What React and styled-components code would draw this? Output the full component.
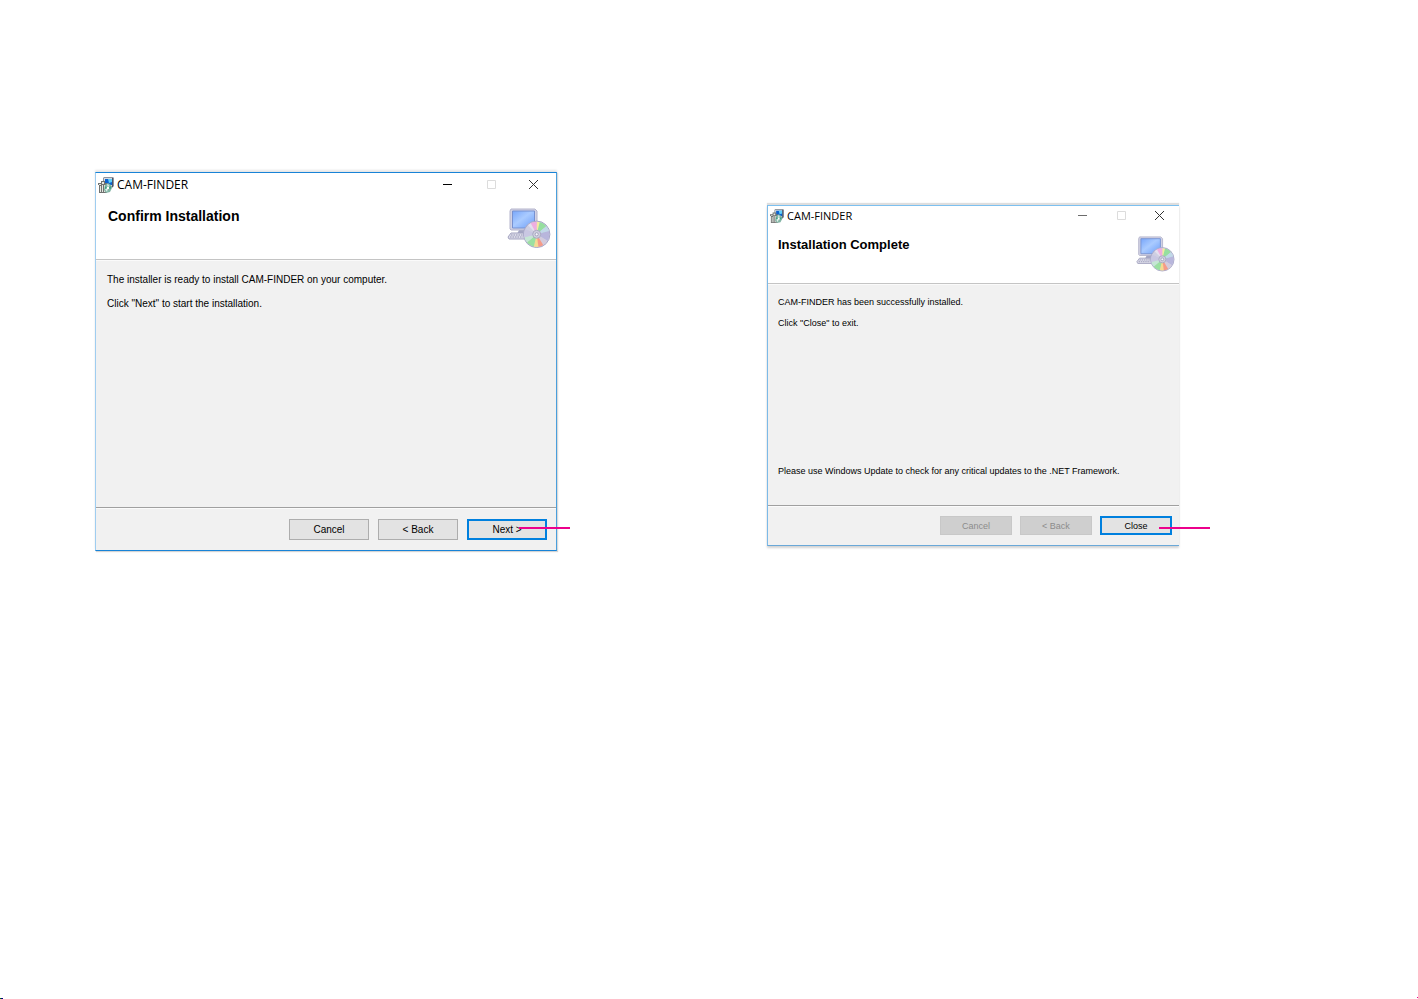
import React from 'react';

import styled, { createGlobalStyle, css } from 'styled-components';

const GlobalStyle = createGlobalStyle`
  * {
    box-sizing: border-box;
  }
  body {
    margin: 0;
    background: #fff;
    color: #000;
    font-family: 'Liberation Sans', Arial, sans-serif;
  }
`;

const Page = styled.main`
  position: relative;
  min-height: 100vh;
  display: grid;
  grid-template-columns: 95fr 462fr 210fr 412fr 239fr;
  align-items: start;
`;

const EdgeMark = styled.span`
  position: absolute;
  height: 1px;
  ${(props) =>
    props.$side === 'left'
      ? css`
          left: 0;
          bottom: 0;
          width: 3px;
          background: linear-gradient(90deg, #007a00 1px, #000080 1px);
        `
      : css`
          right: 0;
          bottom: 1px;
          width: 1px;
          background: #ec008c;
        `}
`;

const Dialog = styled.section`
  display: flex;
  flex-direction: column;
  background: #f1f1f1;
  ${(props) =>
    props.$small
      ? css`
          grid-column: 4;
          margin-top: 205px;
          min-height: 341px;
          border-top: 1px solid #7cc0f0;
          border-left: 1px solid #7cbae8;
          border-bottom: 1px solid #6aa8d8;
          box-shadow: 0 -2px 1px #dedede, 0 2px 2px #d4d4d4;
        `
      : css`
          grid-column: 2;
          margin-top: 172px;
          min-height: 379px;
          border: 1px solid #1883d7;
          border-left-color: #9fcdf0;
          border-right-color: #4a9fdc;
          box-shadow: 0 -2px 2px #e6e6e6, 1px 1px 1px #d4d4d4;
        `}
`;

const TitleBar = styled.div`
  display: flex;
  align-items: center;
  height: ${(props) => (props.$small ? '19px' : '23px')};
  padding: 0 2px;
  background: #fff;
`;

const Title = styled.span`
  flex: 1;
  padding-left: 3px;
  font-family: 'Open Sans', 'Noto Sans', sans-serif;
  font-size: ${(props) => (props.$small ? '11px' : '12px')};
  line-height: 16px;
`;

const WindowButton = styled.button`
  display: flex;
  align-items: center;
  justify-content: center;
  width: ${(props) => (props.$small ? '39px' : '44px')};
  height: 100%;
  padding: 0;
  border: 0;
  background: none;

  &:last-child {
    width: ${(props) => (props.$small ? '36px' : '41px')};
  }
`;

const Banner = styled.header`
  display: flex;
  justify-content: space-between;
  height: ${(props) => (props.$small ? '59px' : '64px')};
  padding: ${(props) => (props.$small ? '11px 4px 0 10px' : '12px 5px 0 12px')};
  background: #fff;
  border-bottom: 1px solid #c4c4c4;
`;

const Heading = styled.h1`
  margin: 0;
  font-size: ${(props) => (props.$small ? '13px' : '14px')};
  line-height: ${(props) => (props.$small ? '18px' : '16px')};
  font-weight: bold;
`;

const Content = styled.div`
  flex: 1;
  display: flex;
  flex-direction: column;
  gap: ${(props) => (props.$small ? '9px' : '12px')};
  padding: ${(props) => (props.$small ? '11px 10px 28px' : '13px 11px')};
  border-top: 1px solid #fafafa;
`;

const Text = styled.p`
  margin: 0;
  font-size: ${(props) => (props.$small ? '9px' : '10px')};
  line-height: 12px;
`;

const Note = styled(Text)`
  margin-top: auto;
`;

const Footer = styled.footer`
  display: flex;
  justify-content: flex-end;
  gap: ${(props) => (props.$small ? '8px' : '9px')};
  padding: ${(props) => (props.$small ? '10px 7px' : '11px 9px 10px')};
  border-top: 1px solid #a0a0a0;
  box-shadow: inset 0 1px #fbfbfb;
`;

const Action = styled.div`
  position: relative;
`;

const Button = styled.button`
  display: block;
  width: ${(props) => (props.$small ? '72px' : '80px')};
  height: ${(props) => (props.$small ? '19px' : '21px')};
  padding: 0;
  border: 1px solid #adadad;
  background: #e3e3e3;
  color: #000;
  font-family: inherit;
  font-size: ${(props) => (props.$small ? '9px' : '10px')};
  line-height: 12px;

  ${(props) =>
    props.$primary &&
    css`
      border: 2px solid #0080de;
    `}

  &:disabled {
    border-color: #c8c8c8;
    background: #cfcfcf;
    color: #8c8c8c;
  }
`;

const Leader = styled.span`
  position: absolute;
  top: ${(props) => (props.$small ? '11px' : '8px')};
  left: ${(props) => (props.$small ? '59px' : '52px')};
  width: 51px;
  height: 2px;
  background: #ec008c;
`;

const InstallerIcon = ({ size }) => (
  <svg width={size} height={size} viewBox='0 0 16 16' aria-hidden='true'>
    <path d='M6 0h9l1 1v8l-2 2H5V1z' fill='#8d939d' />
    <path d='M6 1h8v8H6z' fill='#d5dae2' />
    <path d='M7 2h7v6H7z' fill='#0d62cf' />
    <path d='M10 2h4v3l-3 1z' fill='#5fd0fa' />
    <path d='M14 1h1v9h-1z' fill='#4c5566' />
    <path d='M0 6h3V4h4v2h2v10H1V8H0z' fill='#6f7270' />
    <path d='M1 7h2v1H1zM4 5h2v2H4zM2 9h1v6H2zM4 8h1v7H4zM6 8h2v7H6z' fill='#e6e7e2' />
    <path d='M7 8l3-2 3 2 1 3-2 4-4 1-2-3z' fill='#83b5a6' />
    <path d='M9 7l2 1-1 3zM7 12l3-1-1 4z' fill='#e2f1e9' />
    <path d='M10 11l3-2v3zM7 9l2 2-2 1z' fill='#3ba384' />
    <path d='M9 10h2v2H9z' fill='#fff' />
  </svg>
);

const ComputerIcon = ({ size }) => (
  <svg width={size} height={size} viewBox='0 0 44 44' aria-hidden='true'>
    <defs>
      <linearGradient id='screen' x1='0' y1='0' x2='1' y2='1'>
        <stop offset='0' stopColor='#78a6fa' />
        <stop offset='0.45' stopColor='#aacbff' />
        <stop offset='1' stopColor='#6b9df8' />
      </linearGradient>
      <clipPath id='disc'>
        <circle cx='29.7' cy='26.3' r='12.6' />
      </clipPath>
      <filter id='soften'>
        <feGaussianBlur stdDeviation='0.7' />
      </filter>
    </defs>
    <path d='M13 20h10l2 6H10z' fill='#a4a6c4' />
    <path d='M4 1h24l2 2v18l-2 1H4l-1-1V3z' fill='#d2d2e4' stroke='#b4b4cc' />
    <path d='M5.5 3h22v17h-22z' fill='url(#screen)' stroke='#7791d0' />
    <path d='M4 25h14l1 4-2 2H2l-1-2z' fill='#dadae8' stroke='#a3a3c0' />
    <path d='M4 27h13M3 29h13' stroke='#9a9ab8' strokeDasharray='1.5 1' />
    <circle cx='29.7' cy='26.3' r='13.2' fill='#cfcfe2' stroke='#a6a6c6' />
    <g clipPath='url(#disc)'>
      <g filter='url(#soften)'>
        <path d='M29.7 26.3L18 14l6-4z' fill='#e4e0ee' />
        <path d='M29.7 26.3L22 12l8-3z' fill='#efaee0' />
        <path d='M29.7 26.3L30 9l5 2z' fill='#f4eba0' />
        <path d='M29.7 26.3L34 9l8 7z' fill='#96dfa0' />
        <path d='M29.7 26.3L42 16l4 7z' fill='#c1d9e8' />
        <path d='M29.7 26.3L46 22v14z' fill='#b8b6dc' />
        <path d='M29.7 26.3L43 35l-6 6z' fill='#d3cbdc' />
        <path d='M29.7 26.3L38 40l-8 2z' fill='#f59b88' />
        <path d='M29.7 26.3L32 43h-7z' fill='#f3da93' />
        <path d='M29.7 26.3L26 42l-8-6z' fill='#9be0a1' />
        <path d='M29.7 26.3L18 36l-3-6z' fill='#c5e6d4' />
        <path d='M29.7 26.3L14 30V19z' fill='#c9c7e2' />
      </g>
    </g>
    <circle cx='29.7' cy='26.3' r='4' fill='#cfd0df' stroke='#a9a9c2' />
    <circle cx='29.7' cy='26.3' r='1.6' fill='#f5f5fa' stroke='#a2a2bc' />
  </svg>
);

const glyphs = {
  Minimize: <path d='M1 5.5h9' />,
  Maximize: <path d='M1.5 1.5h8v8h-8z' />,
  Close: <path d='M1 1l9 9M10 1l-9 9' />,
};

const glyphColors = (small) => ({
  Minimize: small ? '#6c6c6c' : '#000',
  Maximize: '#dcdcdc',
  Close: '#333',
});

const InstallerDialog = ({ small, heading, lines, note, buttons }) => {
  const colors = glyphColors(small);
  return (
    <Dialog $small={small} aria-label={heading}>
      <TitleBar $small={small}>
        <InstallerIcon size={small ? 14 : 16} />
        <Title $small={small}>CAM-FINDER</Title>
        {Object.keys(glyphs).map((name) => (
          <WindowButton
            key={name}
            $small={small}
            type='button'
            aria-label={name}
            disabled={name === 'Maximize'}
          >
            <svg
              width='11'
              height='11'
              viewBox='0 0 11 11'
              fill='none'
              stroke={colors[name]}
            >
              {glyphs[name]}
            </svg>
          </WindowButton>
        ))}
      </TitleBar>
      <Banner $small={small}>
        <Heading $small={small}>{heading}</Heading>
        <ComputerIcon size={small ? 39 : 44} />
      </Banner>
      <Content $small={small}>
        {lines.map((line) => (
          <Text key={line} $small={small}>
            {line}
          </Text>
        ))}
        {note && <Note $small={small}>{note}</Note>}
      </Content>
      <Footer $small={small}>
        {buttons.map((button) => (
          <Action key={button.label}>
            <Button
              type='button'
              $small={small}
              $primary={button.primary}
              disabled={button.disabled}
            >
              {button.label}
            </Button>
            {button.primary && <Leader $small={small} />}
          </Action>
        ))}
      </Footer>
    </Dialog>
  );
};

const App = () => {
  return (
    <>
      <GlobalStyle />
      <Page>
        <InstallerDialog
          heading='Confirm Installation'
          lines={[
            'The installer is ready to install CAM-FINDER on your computer.',
            'Click "Next" to start the installation.',
          ]}
          buttons={[
            { label: 'Cancel' },
            { label: '< Back' },
            { label: 'Next >', primary: true },
          ]}
        />
        <InstallerDialog
          small
          heading='Installation Complete'
          lines={[
            'CAM-FINDER has been successfully installed.',
            'Click "Close" to exit.',
          ]}
          note='Please use Windows Update to check for any critical updates to the .NET Framework.'
          buttons={[
            { label: 'Cancel', disabled: true },
            { label: '< Back', disabled: true },
            { label: 'Close', primary: true },
          ]}
        />
        <EdgeMark $side='left' />
        <EdgeMark $side='right' />
      </Page>
    </>
  );
};

export default App;
